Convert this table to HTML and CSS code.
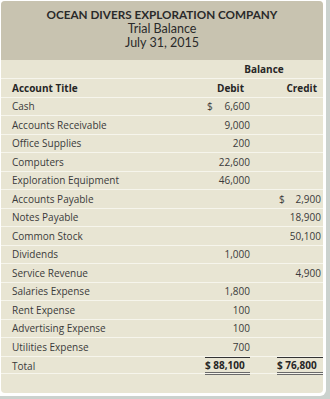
FILE: index.html
```html
<!DOCTYPE html>
<html lang="en">
<head>
<meta charset="utf-8">
<title>Trial Balance</title>
<link rel="stylesheet" href="styles.css">
</head>
<body>
<div class="frame">
  <div class="panel">
    <header class="title">
      <div class="company">OCEAN DIVERS EXPLORATION COMPANY</div>
      <div>Trial Balance</div>
      <div>July 31, 2015</div>
    </header>
    <div class="row band"><span></span><span class="balance">Balance</span></div>
    <div class="row head"><span class="name">Account Title</span><span class="dr">Debit</span><span></span><span class="cr">Credit</span></div>
    <div class="row"><span class="name">Cash</span><span class="dr amt"><i>$</i>6,600</span><span></span><span class="cr"></span></div>
    <div class="row"><span class="name">Accounts Receivable</span><span class="dr amt">9,000</span><span></span><span class="cr"></span></div>
    <div class="row"><span class="name">Office Supplies</span><span class="dr amt">200</span><span></span><span class="cr"></span></div>
    <div class="row"><span class="name">Computers</span><span class="dr amt">22,600</span><span></span><span class="cr"></span></div>
    <div class="row"><span class="name">Exploration Equipment</span><span class="dr amt">46,000</span><span></span><span class="cr"></span></div>
    <div class="row"><span class="name">Accounts Payable</span><span class="dr"></span><span></span><span class="cr amt"><i>$</i>2,900</span></div>
    <div class="row"><span class="name">Notes Payable</span><span class="dr"></span><span></span><span class="cr amt">18,900</span></div>
    <div class="row"><span class="name">Common Stock</span><span class="dr"></span><span></span><span class="cr amt">50,100</span></div>
    <div class="row"><span class="name">Dividends</span><span class="dr amt">1,000</span><span></span><span class="cr"></span></div>
    <div class="row"><span class="name">Service Revenue</span><span class="dr"></span><span></span><span class="cr amt">4,900</span></div>
    <div class="row"><span class="name">Salaries Expense</span><span class="dr amt">1,800</span><span></span><span class="cr"></span></div>
    <div class="row"><span class="name">Rent Expense</span><span class="dr amt">100</span><span></span><span class="cr"></span></div>
    <div class="row"><span class="name">Advertising Expense</span><span class="dr amt">100</span><span></span><span class="cr"></span></div>
    <div class="row"><span class="name">Utilities Expense</span><span class="dr amt">700</span><span></span><span class="cr"></span></div>
    <div class="row total"><span class="name">Total</span><span class="dr amt sum">$ 88,100</span><span></span><span class="cr amt sum">$ 76,800</span></div>
  </div>
</div>
</body>
</html>
```
FILE: styles.css
```css
html {
  background: #cbd2ce;
}
body {
  margin: 0;
  font-family: "Open Sans", "Noto Sans", sans-serif;
  font-size: 10px;
  color: #3a3a3a;
}
.frame {
  width: 322px;
  height: 392px;
  padding: 1px 3px 3px 1px;
  background: #ffffff;
  border-radius: 0 0 6px 0;
}
.panel {
  width: 322px;
  height: 392px;
  background: #e8e5d3;
  border-radius: 4px;
  overflow: hidden;
}
.title {
  background: #c8c3b0;
  height: 58.5px;
  box-sizing: border-box;
  padding-top: 6px;
  text-align: center;
  font-family: "Lato", "Open Sans", sans-serif;
  font-size: 12.5px;
  line-height: 14.5px;
  color: #2a2a2a;
}
.company {
  font-weight: 700;
  font-size: 11.7px;
}
.row {
  display: grid;
  grid-template-columns: 204px 45px 27px 46px;
  height: 18.5px;
  box-sizing: border-box;
  border-top: 1px solid #f6f5ec;
  align-items: center;
}
.band {
  grid-template-columns: 204px 118px;
  border-top: none;
}
.balance {
  text-align: center;
  font-weight: 700;
  color: #262626;
}
.head {
  font-weight: 700;
  color: #262626;
}
.name {
  padding-left: 11px;
}
.head .dr {
  text-align: center;
  padding-left: 6px;
}
.head .cr {
  text-align: right;
  padding-right: 6px;
}
.amt {
  display: flex;
  justify-content: flex-end;
  height: 100%;
  align-items: center;
}
.amt i {
  font-style: normal;
  margin-right: auto;
  padding-left: 2px;
}
.cr.amt {
  padding-right: 2px;
}
.total .sum {
  font-weight: 700;
  color: #262626;
  justify-content: flex-start;
  border-top: 1.5px solid #333333;
  border-bottom: 3px double #6a6a6a;
  box-sizing: border-box;
}
.total {
  border-bottom: 1px solid #f6f5ec;
}
```
